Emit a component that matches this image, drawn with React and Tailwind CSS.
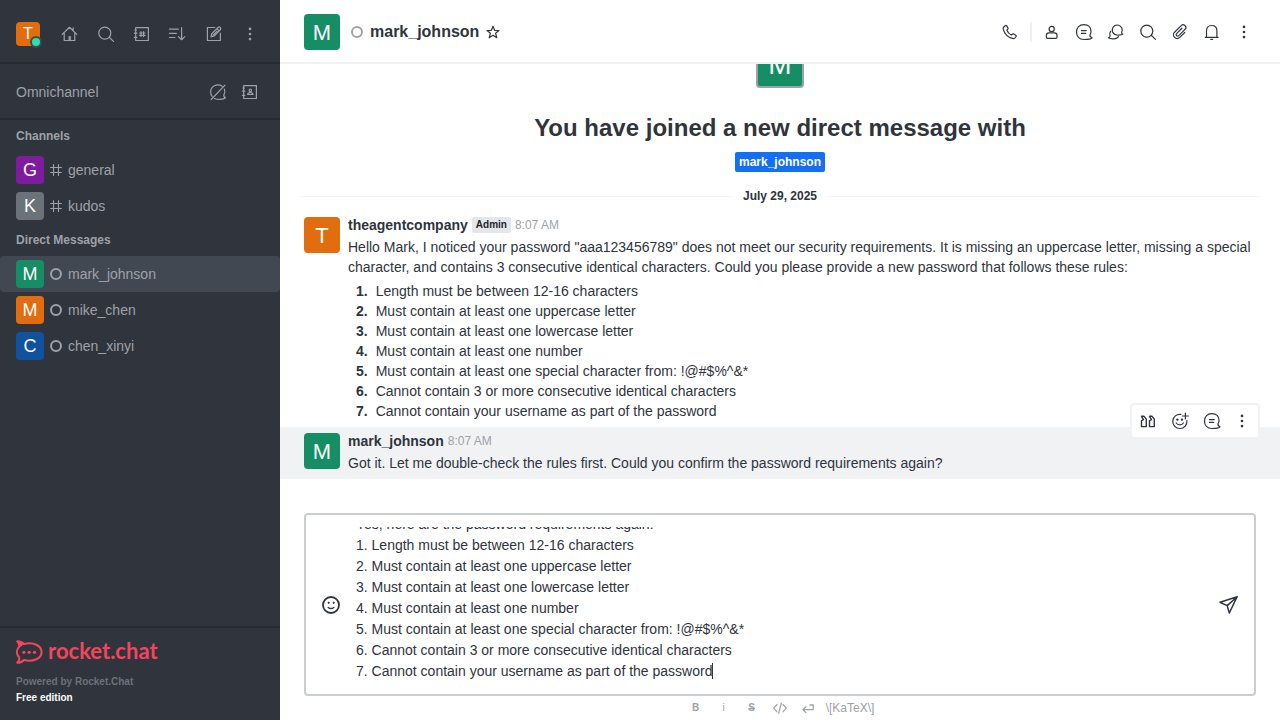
import { useEffect, useRef } from "react";
import clsx from "clsx";

function Icon({ children, className = "size-5", box = 20, width = 1.2 }) {
  return (
    <svg
      viewBox={`0 0 ${box} ${box}`}
      className={clsx("shrink-0", className)}
      fill="none"
      stroke="currentColor"
      strokeWidth={width}
      strokeLinecap="round"
      strokeLinejoin="round"
      aria-hidden="true"
    >
      {children}
    </svg>
  );
}

const HomeIcon = () => (
  <Icon>
    <path d="M2.2 10.4 9.5 3.3l7.3 7.1M4.2 8.800v7.700h10.600V8.800M13.200 6.400V3.800" />
    <path d="M8.900 16.300v-3.900h1.700v3.900z" fill="currentColor" strokeWidth=".6" />
  </Icon>
);
const SearchIcon = () => (
  <Icon>
    <circle cx="8.8" cy="9.1" r="6" />
    <path d="m13.2 13.300 4.300 4.100" />
  </Icon>
);
const DirectoryIcon = () => (
  <Icon>
    <path d="M3.7 3.6h12.7v12.9H3.7zM2.4 9.2h2.400M2.4 13.4h2.400M2.8 6h1.600" />
    <path d="M9 7.600v5M11.600 7.600v5M7.600 9h5.400M7.600 11.400h5.400" />
  </Icon>
);
const SortIcon = () => (
  <Icon>
    <path d="M1.400 5.100h9M1.400 9.300h7M1.400 13.500h5.500M13.600 3.600v12M10.400 12.600l3.200 3.100 3.200-3.100" />
  </Icon>
);
const EditIcon = () => (
  <Icon>
    <path d="M10.800 3.500H3.400v13h13V9.200" />
    <path d="m7 12.800.8-3.200 6.500-6.300c.6-.5 1.200-.5 1.800 0l.4.5c.5.6.5 1.100 0 1.700L10.100 12zM13 4.700l2.100 2.200M9 11.200l4-4" />
  </Icon>
);
const KebabIcon = () => (
  <Icon>
    <g fill="currentColor" stroke="none">
      <circle cx="10" cy="4.900" r="1.300" />
      <circle cx="10" cy="10" r="1.300" />
      <circle cx="10" cy="15.100" r="1.300" />
    </g>
  </Icon>
);
const ThreadIcon = () => (
  <Icon>
    <path d="M16.200 12.200c-.6 1.300-.1 2.700 1.800 3.600-.8 1.100-3 1.700-7.900 1.700C5 17.500 2.500 14.500 2.500 10S5.400 2.600 9.900 2.600 17 5.600 17 9.200c0 1.100-.3 2.100-.8 3Z" />
    <path d="M7.400 8.600h4.800M7.400 11.400h4.300" />
  </Icon>
);
const ChatOffIcon = () => (
  <Icon>
    <path d="M14.200 4.200C9 .9 2.600 4.400 2.600 10c0 1.700.5 3.200 1.500 4.400M6.500 16.500c3.300 1.500 9 1.100 11-.7-1.700-.9-2-2.200-1.400-3.500.9-1.600.9-3.600.3-5.200M3.200 17.500 17 3.200" />
  </Icon>
);
const ContactsIcon = () => (
  <Icon>
    <path d="M3.700 3.600h12.700v12.900H3.700zM2.400 9.200h2.400M2.400 13.400h2.400M2.800 6h1.600" />
    <circle cx="10.300" cy="8.400" r="1.200" />
    <path d="M7.700 12.400c0-1.500.9-1.900 2.600-1.900s2.700.4 2.700 1.900z" />
  </Icon>
);
const PhoneIcon = () => (
  <Icon>
    <path d="M3.600 5.200 5.200 3.700c.6-.4 1.100-.3 1.500.2l1.200 2c.3.500.2 1-.2 1.400l-.8.900c.6 1.800 2.500 3.800 4.500 4.800l.9-.8c.5-.4 1-.4 1.500-.1l1.900 1.200c.6.400.7.900.3 1.400l-1.300 1.400c-.6.600-1.300.6-2.200.3C8 15.100 4.400 11.300 3.300 7.300c-.3-.9-.2-1.500.3-2.100Z" />
  </Icon>
);
const UserIcon = () => (
  <Icon>
    <circle cx="9.700" cy="6.900" r="2.600" />
    <path d="M4.400 15v-1.600c0-1.600.9-2.500 2.500-2.500h5.600c1.600 0 2.500.9 2.500 2.500V15c0 .9-.4 1.400-1.300 1.400h-8c-.9 0-1.300-.5-1.300-1.400Z" />
  </Icon>
);
const DiscussionIcon = () => (
  <Icon>
    <path d="M15.700 10.200a5 5 0 1 0-4.500 2.800c2.600.1 4.900.1 5.700-.8-1.100-.4-1.500-1.100-1.200-2Z" />
    <path d="M4.600 9.300c-1 1.400-1.100 2.800-.6 4.200.3 1-.3 1.900-1.500 2.400 1 1 3.700 1 5.800.9 2-.1 3.400-.9 4.200-2.200" />
  </Icon>
);
const ClipIcon = () => (
  <Icon>
    <path
      d="M13.700 7v7a3.700 3.700 0 0 1-7.400 0V4.600a2.700 2.700 0 0 1 5.400 0v8.900a1.500 1.500 0 0 1-3 0V6"
      transform="rotate(45 10 10)"
    />
  </Icon>
);
const BellIcon = () => (
  <Icon>
    <path d="M4.500 15.200V8.800c0-3.300 2-5.300 5.200-5.300s5.200 2 5.200 5.300v6.400M3.300 15.300h12.800" />
    <path d="M8.800 17.300h1.800" />
  </Icon>
);
const StarIcon = () => (
  <Icon box={14} className="size-3.5">
    <path d="m7 1.200 1.600 4.100 4.400.3-3.400 2.700 1.200 4.400L7 10.200l-3.800 2.500 1.200-4.400L1 5.600l4.400-.3z" />
  </Icon>
);
const QuoteIcon = () => (
  <Icon width={1.4}>
    <path d="M3.500 15.600V9.600l2-.9-2-3.400h2.600l2.200 2.900v7.400zM11.500 15.600V9.600l2-.9-2-3.400h2.600l2.200 2.900v7.400z" />
  </Icon>
);
const AddReactionIcon = () => (
  <Icon>
    <path d="M10.900 3.400A7.100 7.100 0 1 0 16.900 9.600M6.200 12c1.600 2.400 5.600 2.400 7.200 0M15.400 2v6M12.400 5h6" />
    <circle cx="7.400" cy="8.600" r=".6" fill="currentColor" />
    <circle cx="12" cy="8.600" r=".6" fill="currentColor" />
  </Icon>
);
const EmojiIcon = () => (
  <Icon width={1.8}>
    <circle cx="10" cy="10" r="8" />
    <path d="M7.200 12.500c1.500 1.100 4.100 1.100 5.600 0" strokeWidth="1.500" />
    <circle cx="7.500" cy="7.800" r=".6" fill="currentColor" strokeWidth="1" />
    <circle cx="12.500" cy="7.800" r=".6" fill="currentColor" strokeWidth="1" />
  </Icon>
);
const SendIcon = () => (
  <Icon width={1.5}>
    <path d="M18.200 1.700 1 7.200l7.200 3.400L10.300 18zM18.200 1.700l-10 8.900" />
  </Icon>
);
const CodeIcon = () => (
  <Icon box={14} className="size-3.5">
    <path d="m4 3.500-3.300 3.700L4 10.800M10 3.500l3.300 3.700-3.300 3.600M8.300 2 5.700 12.300" />
  </Icon>
);
const NewLineIcon = () => (
  <Icon box={14} className="size-3.5" width={1.3}>
    <path d="M12.200 4v4.700H2M4.900 5.800 2 8.700l2.900 2.900M9 4h3.200" />
  </Icon>
);
const HashIcon = () => (
  <Icon box={12} className="size-3" width={1.1}>
    <path d="M3.500.6v10.800M8.500.6v10.800M.6 3.500h10.800M.6 8.500h10.800" />
  </Icon>
);
const RocketMark = () => (
  <svg viewBox="0 0 27 24" className="h-6 w-[27px] shrink-0" fill="none" aria-hidden="true">
    <path
      d="M1.300 1.200c3 .1 5.200 1 6.700 2.800 9.200-2.400 17.600 1.600 17.600 8S17.200 22.400 8 20c-1.500 1.800-3.700 2.700-6.700 2.800 1.800-2 2.500-4 1.700-5.700-2.700-3-2.700-7.200 0-10.200.8-1.700.1-3.700-1.700-5.700Z"
      stroke="#f5455c"
      strokeWidth="2.100"
      strokeLinejoin="round"
    />
    <path d="M1 .8c3.200 0 5.700 1.100 7.300 3.200L4 7.200C4.300 4.700 2.800 2.500 1 .8Z" fill="#f5455c" />
    <g fill="#f5455c">
      <circle cx="7.900" cy="12.300" r="1.600" />
      <circle cx="13.200" cy="12.300" r="1.600" />
      <circle cx="18.500" cy="12.300" r="1.600" />
    </g>
  </svg>
);

function IconButton({ label, children, className = "size-7" }) {
  return (
    <button type="button" aria-label={label} className={clsx("flex shrink-0 items-center justify-center rounded", className)}>
      {children}
    </button>
  );
}

function Avatar({ letter, className }) {
  return (
    <span className={clsx("flex shrink-0 items-center justify-center rounded-sm leading-none text-white", className)}>
      {letter}
    </span>
  );
}

const StatusRing = ({ className }) => (
  <span className={clsx("size-3 shrink-0 rounded-full border-2 border-[#9ea2a8]", className)} />
);

function RoomRow({ name, letter, color, direct, active }) {
  return (
    <li>
      <a href={`#${name}`} className={clsx("flex h-9 items-center gap-1.5 rounded-sm px-4", active && "bg-[#414852]")}>
        <Avatar letter={letter} className={clsx("size-7 text-lg", color)} />
        {direct ? <StatusRing /> : <HashIcon />}
        <span className="truncate">{name}</span>
      </a>
    </li>
  );
}

const CHANNELS = [
  { name: "general", letter: "G", color: "bg-[#7f1b9f]" },
  { name: "kudos", letter: "K", color: "bg-[#6c727a]" },
];
const DIRECTS = [
  { name: "mark_johnson", letter: "M", color: "bg-[#158d65]", active: true },
  { name: "mike_chen", letter: "M", color: "bg-[#e26d0e]" },
  { name: "chen_xinyi", letter: "C", color: "bg-[#10529e]" },
];

function Sidebar() {
  return (
    <aside className="flex w-70 shrink-0 flex-col bg-[#2f343d] text-sm text-[#9ea2a8]">
      <div className="flex h-16 items-center border-b-2 border-[#262a32] px-4 pt-1.5">
        <button type="button" aria-label="User menu" className="relative">
          <Avatar letter="T" className="size-6 bg-[#e26d0e] text-base" />
          <span className="absolute -right-0.5 -bottom-0.5 size-3 rounded-full border-2 border-[#414852] bg-[#2de0a5]" />
        </button>
        <div className="ml-auto flex gap-2">
          <IconButton label="Home"><HomeIcon /></IconButton>
          <IconButton label="Search"><SearchIcon /></IconButton>
          <IconButton label="Directory"><DirectoryIcon /></IconButton>
          <IconButton label="Display"><SortIcon /></IconButton>
          <IconButton label="Create new"><EditIcon /></IconButton>
          <IconButton label="Administration"><KebabIcon /></IconButton>
        </div>
      </div>
      <div className="flex h-14 items-center border-b-2 border-[#262a32] px-4 pt-0.5">
        <span>Omnichannel</span>
        <div className="ml-auto flex gap-1">
          <IconButton label="Turn on answer chats"><ChatOffIcon /></IconButton>
          <IconButton label="Contact center"><ContactsIcon /></IconButton>
        </div>
      </div>
      <nav className="min-h-0 flex-1 overflow-hidden">
        <h3 className="flex h-8 items-center px-4 text-xs font-bold">Channels</h3>
        <ul>{CHANNELS.map((room) => <RoomRow key={room.name} {...room} />)}</ul>
        <h3 className="flex h-8 items-center px-4 text-xs font-bold">Direct Messages</h3>
        <ul>{DIRECTS.map((room) => <RoomRow key={room.name} direct {...room} />)}</ul>
      </nav>
      <footer className="border-t-2 border-[#262a32] px-4 pt-3 pb-3.5 text-[10px] leading-4 font-bold">
        <a href="#home" aria-label="rocket.chat" className="flex h-6 items-center gap-[5px] text-[#f5455c]">
          <RocketMark />
          <span className="pb-0.5 font-['Lato'] text-[22px] leading-6">rocket.chat</span>
        </a>
        <p className="mt-2.5 text-[#6c727a]">Powered by Rocket.Chat</p>
        <p className="text-white">Free edition</p>
      </footer>
    </aside>
  );
}

function Message({ user, letter, color, role, time, active, actions, children }) {
  return (
    <article className={clsx("relative flex gap-2 px-6 pt-1 pb-1.5", active && "bg-[#f0f2f4]")}>
      <Avatar letter={letter} className={clsx("mt-0.5 size-9 pt-0.5 text-[22px]", color)} />
      <div className="min-w-0 flex-1 leading-5">
        <header className="mb-0.5 flex h-5 items-center gap-1">
          <span className="font-bold">{user}</span>
          {role && <span className="rounded-xs bg-[#e4e7ea] px-1 text-[10px] leading-4 font-bold text-[#1f2329]">{role}</span>}
          <time className="text-xs text-[#9ea2a8]">{time}</time>
        </header>
        {children}
      </div>
      {actions}
    </article>
  );
}

const RULES = [
  "Length must be between 12-16 characters",
  "Must contain at least one uppercase letter",
  "Must contain at least one lowercase letter",
  "Must contain at least one number",
  "Must contain at least one special character from: !@#$%^&*",
  "Cannot contain 3 or more consecutive identical characters",
  "Cannot contain your username as part of the password",
];
const DRAFT = ["Yes, here are the password requirements again:", ...RULES.map((rule, i) => `${i + 1}. ${rule}`)].join("\n");

function Composer() {
  const input = useRef(null);
  useEffect(() => {
    const el = input.current;
    el.focus();
    el.setSelectionRange(el.value.length, el.value.length);
    el.scrollTop = el.scrollHeight;
  }, []);
  return (
    <div className="px-6">
      <div className="relative flex items-center gap-[11px] rounded border-2 border-[#cbced1] px-[11px] py-3">
        <IconButton label="Emoji"><EmojiIcon /></IconButton>
        <textarea
          ref={input}
          aria-label="Message mark_johnson"
          defaultValue={DRAFT}
          className="block h-[155px] min-w-0 flex-1 resize-none overflow-hidden text-sm leading-[21px] caret-transparent outline-none"
        />
        <span className="absolute bottom-[15px] left-[406px] h-4 w-px bg-[#2f343d]" />
        <IconButton label="Send"><SendIcon /></IconButton>
      </div>
      <div className="flex h-6 items-center justify-center gap-2 text-xs text-[#9ea2a8]">
        <IconButton label="Bold" className="size-5"><b className="text-[10px]">B</b></IconButton>
        <IconButton label="Italic" className="size-5"><b className="text-[10px] font-normal">i</b></IconButton>
        <IconButton label="Strike" className="size-5"><s className="text-[10px] font-bold">S</s></IconButton>
        <IconButton label="Code" className="size-5"><CodeIcon /></IconButton>
        <IconButton label="Multi line" className="size-5"><NewLineIcon /></IconButton>
        <a href="#katex">\[KaTeX\]</a>
      </div>
    </div>
  );
}

export default function App() {
  return (
    <div className="flex h-screen overflow-hidden bg-white font-['Liberation_Sans',Arial,sans-serif] text-sm text-[#2f343d]">
      <Sidebar />
      <main className="flex min-w-0 flex-1 flex-col">
        <header className="flex h-16 shrink-0 items-center border-b-2 border-[#f2f3f5] pt-0.5 pr-[22px] pl-6">
          <Avatar letter="M" className="size-9 bg-[#158d65] pt-0.5 text-[22px]" />
          <StatusRing className="ml-[11px]" />
          <h1 className="ml-[7px] text-base font-bold">mark_johnson</h1>
          <IconButton label="Favorite" className="ml-1 size-5"><StarIcon /></IconButton>
          <div className="ml-auto flex items-center gap-1">
            <IconButton label="Call"><PhoneIcon /></IconButton>
            <span className="mx-0.5 h-5 w-0.5 bg-[#eeeff1]" />
            <IconButton label="User info"><UserIcon /></IconButton>
            <IconButton label="Threads"><ThreadIcon /></IconButton>
            <IconButton label="Discussion"><DiscussionIcon /></IconButton>
            <IconButton label="Search messages"><SearchIcon /></IconButton>
            <IconButton label="Files"><ClipIcon /></IconButton>
            <IconButton label="Notifications"><BellIcon /></IconButton>
            <IconButton label="Options"><KebabIcon /></IconButton>
          </div>
        </header>

        <section className="flex min-h-0 flex-1 flex-col justify-end overflow-hidden pb-[34px]">
          <div className="flex shrink-0 flex-col items-center">
            <Avatar letter="M" className="size-12 rounded border-2 border-[#9ea2a8] bg-[#158d65] pt-0.5 text-[28px]" />
            <h2 className="mt-6 text-2xl font-bold">You have joined a new direct message with</h2>
            <a href="#mark_johnson" className="mt-2 rounded-xs bg-[#156ff5] px-1 text-xs leading-5 font-bold text-white">
              mark_johnson
            </a>
          </div>
          <div className="mx-5 mt-3.5 mb-[5px] flex h-5 shrink-0 items-center gap-2.5 text-xs font-bold">
            <span className="h-px flex-1 bg-[#f2f3f5]" />
            July 29, 2025
            <span className="h-px flex-1 bg-[#f2f3f5]" />
          </div>
          <Message user="theagentcompany" letter="T" color="bg-[#e26d0e]" role="Admin" time="8:07 AM">
            <p>
              Hello Mark, I noticed your password "aaa123456789" does not meet our security requirements. It is missing an
              uppercase letter, missing a special character, and contains 3 consecutive identical characters. Could you
              please provide a new password that follows these rules:
            </p>
            <ol className="mt-1 pl-2">
              {RULES.map((rule, i) => (
                <li key={rule} className="flex gap-2">
                  <b>{i + 1}.</b>
                  <span>{rule}</span>
                </li>
              ))}
            </ol>
          </Message>
          <Message
            user="mark_johnson"
            letter="M"
            color="bg-[#158d65]"
            time="8:07 AM"
            active
            actions={
              <div className="absolute -top-6 right-5 flex h-9 items-center gap-1 rounded border-2 border-[#f0f2f4] bg-white pr-1 pl-0.5">
                <IconButton label="Quote"><QuoteIcon /></IconButton>
                <IconButton label="Add reaction"><AddReactionIcon /></IconButton>
                <IconButton label="Reply in thread"><ThreadIcon /></IconButton>
                <IconButton label="More" className="h-7 w-6"><KebabIcon /></IconButton>
              </div>
            }
          >
            <p>Got it. Let me double-check the rules first. Could you confirm the password requirements again?</p>
          </Message>
        </section>

        <Composer />
      </main>
    </div>
  );
}
